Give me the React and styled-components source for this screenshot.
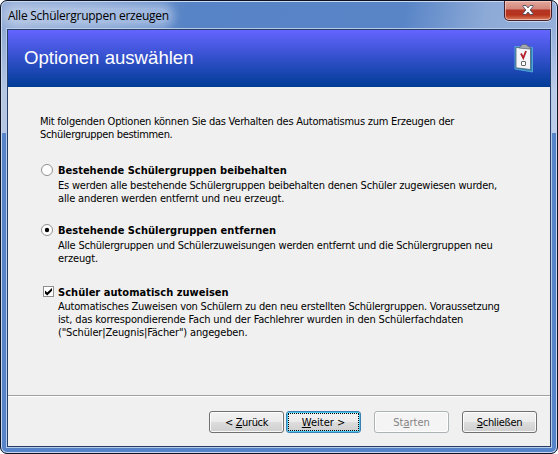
import React from "react";
import styled, { createGlobalStyle, css } from "styled-components";

const Global = createGlobalStyle`
  * { box-sizing: border-box; }
  body { margin: 0; background: #fff; overflow: hidden; }
`;

const Window = styled.div`
  width: 558px;
  height: 454px;
  display: flex;
  flex-direction: column;
  padding: 0 5px 5px;
  border: 1px solid #0c1222;
  border-radius: 7px;
  color: #000;
  font: 11px/13px "DejaVu Sans Condensed", "DejaVu Sans", sans-serif;
  background:
    linear-gradient(180deg, transparent 28px, rgba(255, 255, 255, 0.35) 90px, rgba(255, 255, 255, 0.35) 100%) 0 0 / 100% 132px no-repeat,
    linear-gradient(100deg, #92abd5 0, #7f9fd1 90px, #5784c6 185px, #5985c7 400px, #8daad7 480px, #98b1dc 100%) 0 0 / 100% 132px no-repeat,
    #5784c8;
  box-shadow: inset 0 0 0 1px #c9daf0;
`;

const TitleBar = styled.header`
  height: 27px;
  flex: none;
  display: flex;
  justify-content: space-between;
  padding-left: 2px;
`;

const Title = styled.h1`
  margin: 7px 0 0;
  height: 15px;
  border-radius: 8px;
  background: rgba(222, 231, 246, 0.45);
  box-shadow: 0 0 9px 5px rgba(222, 231, 246, 0.45);
  clip-path: inset(-6px -16px -6px -7px);
  font: 12px/15px "Open Sans", sans-serif;
  letter-spacing: -0.25px;
  white-space: nowrap;
`;

const CloseButton = styled.button`
  width: 48px;
  height: 20px;
  margin: 0;
  padding: 0 0 1px;
  display: grid;
  place-items: center;
  border: 1px solid #43202c;
  border-top: 0;
  border-radius: 0 0 5px 5px;
  background: linear-gradient(#e2a89d 0, #d3867a 8px, #b53426 9px, #b8331c 14px, #d98060 100%);
  box-shadow: inset 0 0 0 1px rgba(255, 220, 210, 0.6), 0 1px 0 rgba(255, 255, 255, 0.5);
`;

const Client = styled.main`
  flex: 1;
  display: flex;
  flex-direction: column;
  border: 1px solid #253d66;
  outline: 1px solid #b6cbe9;
  margin: 1px;
  background: #f0f0f0;
`;

const Banner = styled.div`
  height: 57px;
  flex: none;
  display: flex;
  align-items: center;
  justify-content: space-between;
  padding: 0 16px 2px;
  background: linear-gradient(#6464ff, #003c96);
`;

const Heading = styled.h2`
  margin: 0;
  color: #fff;
  font: 18.6px/22px "Liberation Sans", Arial, sans-serif;
`;

const Body = styled.div`
  flex: 1;
  padding: 28px 0 0 32px;
`;

const Line = styled.span`
  display: block;
  height: 13px;
  white-space: nowrap;
  letter-spacing: ${(p) => p.$track || 0}px;
`;

const Option = styled.label`
  display: grid;
  grid-template-columns: 18px 1fr;
  margin-top: ${(p) => p.$gap}px;
`;

const OptionTitle = styled.strong`
  display: block;
  height: ${(p) => p.$height || 15}px;
  font-weight: bold;
  white-space: nowrap;
  letter-spacing: ${(p) => p.$track || 0}px;
`;

const Mark = styled.svg`
  display: block;
  margin-left: ${(p) => p.$inset || 1}px;
`;

const Footer = styled.footer`
  height: 51px;
  flex: none;
  display: flex;
  align-items: flex-start;
  padding: 15px 0 0 201px;
  border-top: 1px solid #a0a0a0;
  box-shadow: inset 0 1px 0 #fff;
`;

const Button = styled.button`
  width: 75px;
  height: 22px;
  margin: 0 0 0 ${(p) => p.$gap || 0}px;
  padding: 0;
  border: 1px solid #707070;
  border-radius: 3px;
  background: linear-gradient(#f2f2f2 0, #ebebeb 49%, #dddddd 50%, #cfcfcf 100%);
  box-shadow: inset 0 0 0 1px rgba(255, 255, 255, 0.85);
  color: #000;
  font: inherit;
  letter-spacing: ${(p) => p.$track || 0}px;
  text-align: center;

  ${(p) => p.$focused && css`
    border-color: #3c7fb1;
    box-shadow: inset 0 0 0 1px #48c8f0;
    padding: 0 1px;
  `}

  &:disabled {
    border-color: #adb2b5;
    background: #f4f4f4;
    color: #838383;
  }
`;

const FocusRing = styled.span`
  display: block;
  height: 18px;
  line-height: 17px;
  border: 1px dotted #000;
`;

const Key = styled.span`
  text-decoration: underline;
  text-underline-offset: 1px;
  text-decoration-thickness: 1px;
  text-decoration-skip-ink: none;
`;

const Radio = ({ checked }) => (
  <Mark width="12" height="12" viewBox="0 0 12 12">
    <circle cx="6" cy="6" r="5.5" fill="#fff" stroke="#8e8f8f" />
    {checked && <circle cx="6" cy="6" r="2.2" fill="#000" />}
  </Mark>
);

const Checkbox = () => (
  <Mark $inset={3} width="11" height="11" viewBox="0 0 11 11">
    <rect x=".5" y=".5" width="10" height="10" fill="#fff" stroke="#8e8f8f" />
    <path d="M2 4.500v3l2.200 2L9 4.800V2L4.200 6.500z" fill="#000" />
  </Mark>
);

const CloseIcon = () => (
  <svg width="12" height="10" viewBox="0 0 12 10">
    <path d="M1 .5h3l2 2.400L8 .5h3v1L8.200 5 11 8.500v1H8L6 7.100 4 9.500H1v-1L3.800 5 1 1.500z" fill="#fff" stroke="#4b4b60" strokeWidth=".9" />
  </svg>
);

const ClipboardIcon = () => (
  <svg width="20" height="30" viewBox="0 0 20 30">
    <path d="M1 3.500l17.500 1v24.500L1 26z" fill="#2c87b8" stroke="#5fb2dc" strokeWidth=".8" />
    <path d="M2 4.500L16.500 5v21.500L2 24.800z" fill="#f3f5f8" stroke="#506478" strokeWidth=".8" />
    <path d="M5 5l2-2 1.500-1.500h4l1 1.500L16 4v2z" fill="#a3a9b1" stroke="#5c6474" strokeWidth=".7" />
    <path d="M7 10.500l2.300 4.500L12 8" fill="none" stroke="#b51f2c" strokeWidth="1.800" />
    <rect x="7.500" y="18.500" width="4" height="4" rx=".5" fill="#fff" stroke="#666" />
  </svg>
);

export default function App() {
  return (
    <>
      <Global />
      <Window>
        <TitleBar>
          <Title>Alle Schülergruppen erzeugen</Title>
          <CloseButton aria-label="Schließen"><CloseIcon /></CloseButton>
        </TitleBar>
        <Client>
          <Banner>
            <Heading>Optionen auswählen</Heading>
            <ClipboardIcon />
          </Banner>
          <Body>
            <Line $track={-0.245}>Mit folgenden Optionen können Sie das Verhalten des Automatismus zum Erzeugen der</Line>
            <Line $track={-0.33}>Schülergruppen bestimmen.</Line>
            <Option $gap={23}>
              <Radio />
              <div>
                <OptionTitle>Bestehende Schülergruppen beibehalten</OptionTitle>
                <Line $track={-0.205}>Es werden alle bestehende Schülergruppen beibehalten denen Schüler zugewiesen wurden,</Line>
                <Line $track={-0.14}>alle anderen werden entfernt und neu erzeugt.</Line>
              </div>
            </Option>
            <Option $gap={19}>
              <Radio checked />
              <div>
                <OptionTitle $track={0.02}>Bestehende Schülergruppen entfernen</OptionTitle>
                <Line $track={-0.225}>Alle Schülergruppen und Schülerzuweisungen werden entfernt und die Schülergruppen neu</Line>
                <Line $track={-0.12}>erzeugt.</Line>
              </div>
            </Option>
            <Option $gap={21}>
              <Checkbox />
              <div>
                <OptionTitle $height={14} $track={0.03}>Schüler automatisch zuweisen</OptionTitle>
                <Line $track={-0.22}>Automatisches Zuweisen von Schülern zu den neu erstellten Schülergruppen. Voraussetzung</Line>
                <Line $track={-0.15}>ist, das korrespondierende Fach und der Fachlehrer wurden in den Schülerfachdaten</Line>
                <Line $track={-0.15}>("Schüler|Zeugnis|Fächer") angegeben.</Line>
              </div>
            </Option>
          </Body>
          <Footer>
            <Button $track={-0.37}>&lt; <Key>Z</Key>urück</Button>
            <Button $gap={2} $focused><FocusRing><Key>W</Key>eiter &gt;</FocusRing></Button>
            <Button $gap={13} disabled>St<Key>a</Key>rten</Button>
            <Button $gap={13} $track={-0.3}><Key>S</Key>chließen</Button>
          </Footer>
        </Client>
      </Window>
    </>
  );
}
